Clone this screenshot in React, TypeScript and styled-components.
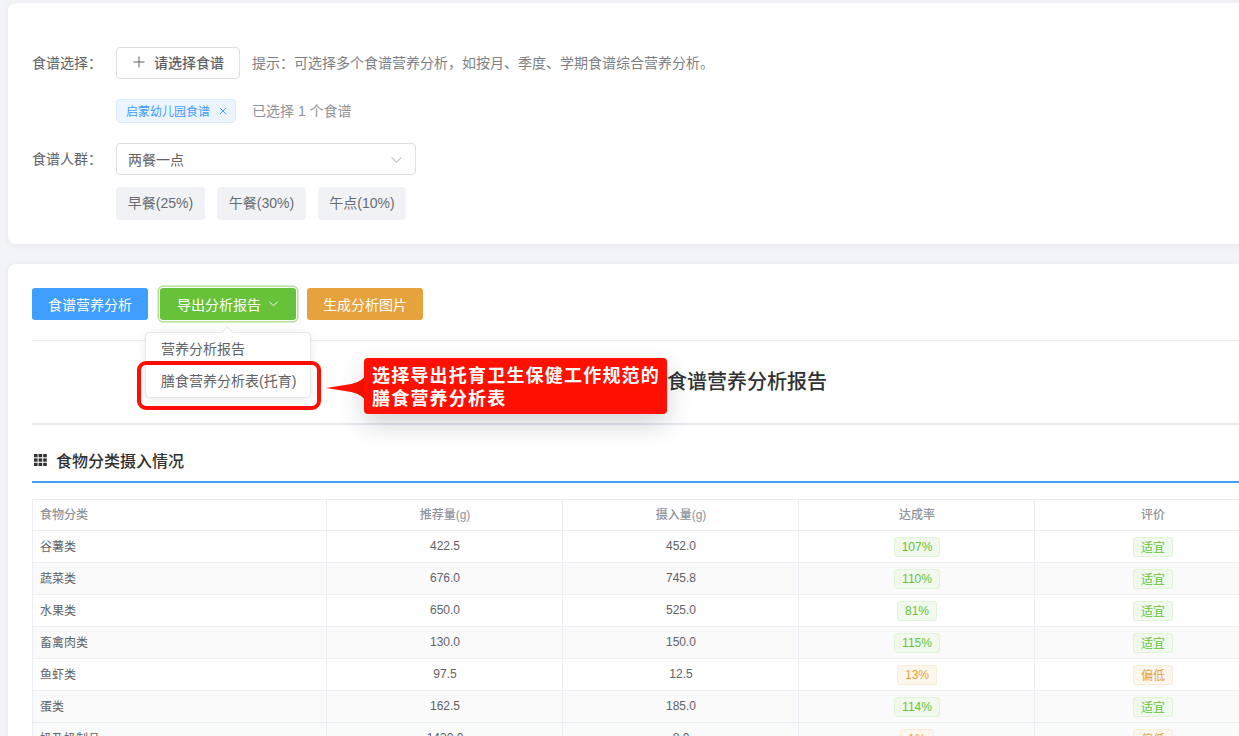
import React from 'react';
import styled, { createGlobalStyle } from 'styled-components';

const Global = createGlobalStyle`
  html, body { margin: 0; padding: 0; height: 736px; overflow: hidden; background: #f3f4f9; }
  body { font-family: "Liberation Sans", "Noto Sans CJK SC", sans-serif; color: #606266; }
  * { box-sizing: border-box; }
`;

const Page = styled.div`
  width: 1300px;
  height: 736px;
  overflow: hidden;
  padding: 3px 0 0 8px;
  display: flex;
  flex-direction: column;
  gap: 20px;
`;

const Card = styled.section`
  background: #fff;
  border-radius: 8px;
  box-shadow: 0 1px 6px rgba(40, 50, 90, 0.06);
`;

const SelectCard = styled(Card)`
  flex: none;
  height: 241px;
  padding: 44px 24px 0;
`;

const FormRow = styled.div<{ $mb: number }>`
  display: flex;
  align-items: center;
  margin-bottom: ${p => p.$mb}px;
`;

const Label = styled.div`
  width: 84px;
  padding-bottom: 2px;
  font-size: 14px;
  color: #606266;
`;

const PickButton = styled.button`
  width: 124px;
  height: 32px;
  display: flex;
  align-items: center;
  justify-content: center;
  gap: 9px;
  background: #fff;
  border: 1px solid #dcdfe6;
  border-radius: 4px;
  color: #606266;
  font: 500 14px "Liberation Sans", "Noto Sans CJK SC", sans-serif;
  padding: 0 0 2px 1px;
`;

const Hint = styled.span`
  margin-left: 12px;
  padding-bottom: 2px;
  font-size: 14px;
  color: #7c7f85;
`;

const Indent = styled.div`
  margin-left: 84px;
  display: flex;
  align-items: center;
`;

const RecipeTag = styled.span`
  width: 120px;
  height: 24px;
  display: flex;
  align-items: center;
  gap: 9px;
  padding: 0 0 1px 9px;
  background: #ecf5ff;
  border: 1px solid #d9ecff;
  border-radius: 4px;
  color: #409eff;
  font-size: 12px;
`;

const Count = styled.span`
  margin-left: 16px;
  padding-bottom: 2px;
  font-size: 14px;
  color: #909399;
`;

const SelectBox = styled.div`
  width: 300px;
  height: 32px;
  display: flex;
  align-items: center;
  justify-content: space-between;
  padding: 0 12px 0 11px;
  border: 1px solid #dcdfe6;
  border-radius: 4px;
  font-size: 14px;
  color: #606266;
`;

const Chips = styled.div`
  margin-left: 84px;
  display: flex;
  gap: 12px;
`;

const Chip = styled.span<{ $w: number }>`
  width: ${p => p.$w}px;
  height: 33px;
  display: flex;
  align-items: center;
  justify-content: center;
  padding-bottom: 3px;
  background: #f0f2f5;
  border-radius: 4px;
  font-size: 14px;
  color: #686b72;
`;

const ReportCard = styled(Card)`
  position: relative;
  padding: 24px 0 0 24px;
  flex: 1;
`;

const Toolbar = styled.div`
  display: flex;
  align-items: center;
  height: 32px;
`;

const ActionButton = styled.button<{ $bg: string; $ml?: number; $w: number; $ring?: boolean }>`
  width: ${p => p.$w}px;
  height: 32px;
  margin-left: ${p => p.$ml ?? 0}px;
  display: flex;
  align-items: center;
  justify-content: center;
  gap: 7px;
  border: none;
  border-radius: 3px;
  background: ${p => p.$bg};
  color: #fff;
  font: 400 14px "Liberation Sans", "Noto Sans CJK SC", sans-serif;
  padding: 0 0 1px;
  ${p => (p.$ring ? 'box-shadow: 0 0 0 1px #fff, 0 0 0 2.5px #b3e19d;' : '')}
`;

const Divider = styled.div<{ $mt: number; $h: number }>`
  width: 1240px;
  margin-top: ${p => p.$mt}px;
  height: ${p => p.$h}px;
  background: #e6e8f0;
`;

const Title = styled.h1`
  margin: 0;
  height: 82px;
  padding: 0 0 4px 635px;
  display: flex;
  align-items: center;
  white-space: nowrap;
  font-size: 20px;
  font-weight: 500;
  color: #303133;
`;

const SectionHead = styled.div`
  width: 1240px;
  height: 58px;
  display: flex;
  align-items: center;
  gap: 8px;
  padding: 13px 0 0 2px;
  border-bottom: 2px solid #409eff;
  font-size: 16px;
  font-weight: 500;
  color: #303133;
`;

const Table = styled.table`
  margin-top: 16px;
  width: 1238px;
  table-layout: fixed;
  border-collapse: collapse;
  font-size: 12px;
`;

const Cell = styled.td<{ $left?: boolean }>`
  height: 32px;
  padding: ${p => (p.$left ? '0 8px 2px 7px' : '0 7px 2px 8px')};
  text-align: ${p => (p.$left ? 'left' : 'center')};
  border: 1px solid #ebeef5;
  color: #606266;
`;

const Head = styled(Cell).attrs({ as: 'th' })`
  height: 31px;
  padding-bottom: 4px;
  font-weight: 500;
  color: #909399;
`;

const Row = styled.tr<{ $bg: string }>`
  background: ${p => p.$bg};
`;

const Badge = styled.span<{ $warn: boolean }>`
  display: inline-flex;
  align-items: center;
  height: 20px;
  margin-top: 2px;
  padding: 0 7px;
  border-radius: 3px;
  vertical-align: middle;
  background: ${p => (p.$warn ? '#fdf6ec' : '#f0f9eb')};
  border: 1px solid ${p => (p.$warn ? '#faecd8' : '#e1f3d8')};
  color: ${p => (p.$warn ? '#e6a23c' : '#67c23a')};
`;

const Menu = styled.div`
  position: absolute;
  left: 137px;
  top: 68px;
  width: 166px;
  height: 66px;
  padding: 1px 0;
  background: #fff;
  border: 1px solid #e4e7ed;
  border-radius: 4px;
  box-shadow: 0 2px 12px rgba(0, 0, 0, 0.08);
  &::before {
    content: '';
    position: absolute;
    left: 77px;
    top: -5px;
    width: 8px;
    height: 8px;
    background: #fff;
    border-left: 1px solid #e4e7ed;
    border-top: 1px solid #e4e7ed;
    transform: rotate(45deg);
  }
`;

const MenuItem = styled.div`
  height: 32px;
  display: flex;
  align-items: center;
  padding: 0 0 5px 15px;
  font-size: 14px;
  color: #606266;
`;

const Highlight = styled.div`
  position: absolute;
  left: 129px;
  top: 97px;
  width: 184px;
  height: 49px;
  border: 4px solid #ff0d00;
  border-radius: 9px;
`;

const Callout = styled.div`
  position: absolute;
  left: 356px;
  top: 94px;
  width: 303px;
  height: 56px;
  padding: 7px 8px;
  background: #ff1000;
  border-radius: 4px;
  box-shadow: 0 10px 26px rgba(30, 40, 70, 0.2);
  color: #fff;
  font-size: 18px;
  font-weight: 700;
  line-height: 23px;
  letter-spacing: 1.2px;
  white-space: nowrap;
`;

const Pointer = styled.svg`
  position: absolute;
  left: 318px;
  top: 111px;
`;

type R = [string, string, string, string, boolean, string, boolean];
const rows: R[] = [
  ['谷薯类', '422.5', '452.0', '107%', false, '适宜', false],
  ['蔬菜类', '676.0', '745.8', '110%', false, '适宜', false],
  ['水果类', '650.0', '525.0', '81%', false, '适宜', false],
  ['畜禽肉类', '130.0', '150.0', '115%', false, '适宜', false],
  ['鱼虾类', '97.5', '12.5', '13%', true, '偏低', true],
  ['蛋类', '162.5', '185.0', '114%', false, '适宜', false],
  ['奶及奶制品', '1430.0', '8.0', '1%', true, '偏低', true],
];

const rowBg = (i: number) => (i === 6 ? '#f9fcfb' : i % 2 ? '#fafafa' : '#fff');

const Chevron = ({ color, size }: { color: string; size: number }) => (
  <svg width={size} height={size} viewBox="0 0 12 12" fill="none" stroke={color} strokeWidth="1">
    <path d="M1.5 4 L6 8.5 L10.5 4" />
  </svg>
);

export default function App() {
  return (
    <>
      <Global />
      <Page>
        <SelectCard>
          <FormRow $mb={20}>
            <Label>食谱选择：</Label>
            <PickButton>
              <svg width="12" height="12" viewBox="0 0 12 12" stroke="#606266" strokeWidth="1">
                <path d="M6 0.5 V11.5 M0.5 6 H11.5" />
              </svg>
              请选择食谱
            </PickButton>
            <Hint>提示：可选择多个食谱营养分析，如按月、季度、学期食谱综合营养分析。</Hint>
          </FormRow>
          <Indent>
            <RecipeTag>
              启蒙幼儿园食谱
              <svg width="8" height="8" viewBox="0 0 8 8" stroke="#409eff" strokeWidth="1">
                <path d="M1 1 L7 7 M7 1 L1 7" />
              </svg>
            </RecipeTag>
            <Count>已选择 1 个食谱</Count>
          </Indent>
          <FormRow $mb={12} style={{ marginTop: 20 }}>
            <Label>食谱人群：</Label>
            <SelectBox>
              两餐一点
              <Chevron color="#c0c4cc" size={13} />
            </SelectBox>
          </FormRow>
          <Chips>
            <Chip $w={89}>早餐(25%)</Chip>
            <Chip $w={89}>午餐(30%)</Chip>
            <Chip $w={88}>午点(10%)</Chip>
          </Chips>
        </SelectCard>
        <ReportCard>
          <Toolbar>
            <ActionButton $bg="#409eff" $w={116}>食谱营养分析</ActionButton>
            <ActionButton $bg="#67c23a" $w={136} $ml={12} $ring>
              导出分析报告
              <Chevron color="#fff" size={11} />
            </ActionButton>
            <ActionButton $bg="#e6a23c" $w={116} $ml={11}>生成分析图片</ActionButton>
          </Toolbar>
          <Divider $mt={20} $h={1} />
          <Title>食谱营养分析报告</Title>
          <Divider $mt={0} $h={2} />
          <SectionHead>
            <svg width="14" height="12" viewBox="0 0 14 12" fill="#303133">
              {[0, 4.4, 8.8].flatMap(y =>
                [0, 4.6, 9.2].map(x => <rect key={`${x}-${y}`} x={x} y={y} width="3.6" height="3.3" />)
              )}
            </svg>
            食物分类摄入情况
          </SectionHead>
          <Table>
            <colgroup>
              <col style={{ width: 294 }} />
              <col style={{ width: 236 }} />
              <col style={{ width: 236 }} />
              <col style={{ width: 236 }} />
              <col style={{ width: 236 }} />
            </colgroup>
            <thead>
              <tr>
                <Head $left>食物分类</Head>
                <Head>推荐量(g)</Head>
                <Head>摄入量(g)</Head>
                <Head>达成率</Head>
                <Head>评价</Head>
              </tr>
            </thead>
            <tbody>
              {rows.map((r, i) => (
                <Row key={r[0]} $bg={rowBg(i)}>
                  <Cell $left>{r[0]}</Cell>
                  <Cell>{r[1]}</Cell>
                  <Cell>{r[2]}</Cell>
                  <Cell><Badge $warn={r[4]}>{r[3]}</Badge></Cell>
                  <Cell><Badge $warn={r[6]}>{r[5]}</Badge></Cell>
                </Row>
              ))}
            </tbody>
          </Table>
          <Menu>
            <MenuItem>营养分析报告</MenuItem>
            <MenuItem>膳食营养分析表(托育)</MenuItem>
          </Menu>
          <Highlight />
          <Pointer width="40" height="26" viewBox="0 0 40 26">
            <path d="M0 13 L22 9.5 C31 8 35 6 39 1 V25 C35 20 31 18 22 16.5 Z" fill="#ff1000" />
          </Pointer>
          <Callout>
            选择导出托育卫生保健工作规范的
            <br />
            膳食营养分析表
          </Callout>
        </ReportCard>
      </Page>
    </>
  );
}
